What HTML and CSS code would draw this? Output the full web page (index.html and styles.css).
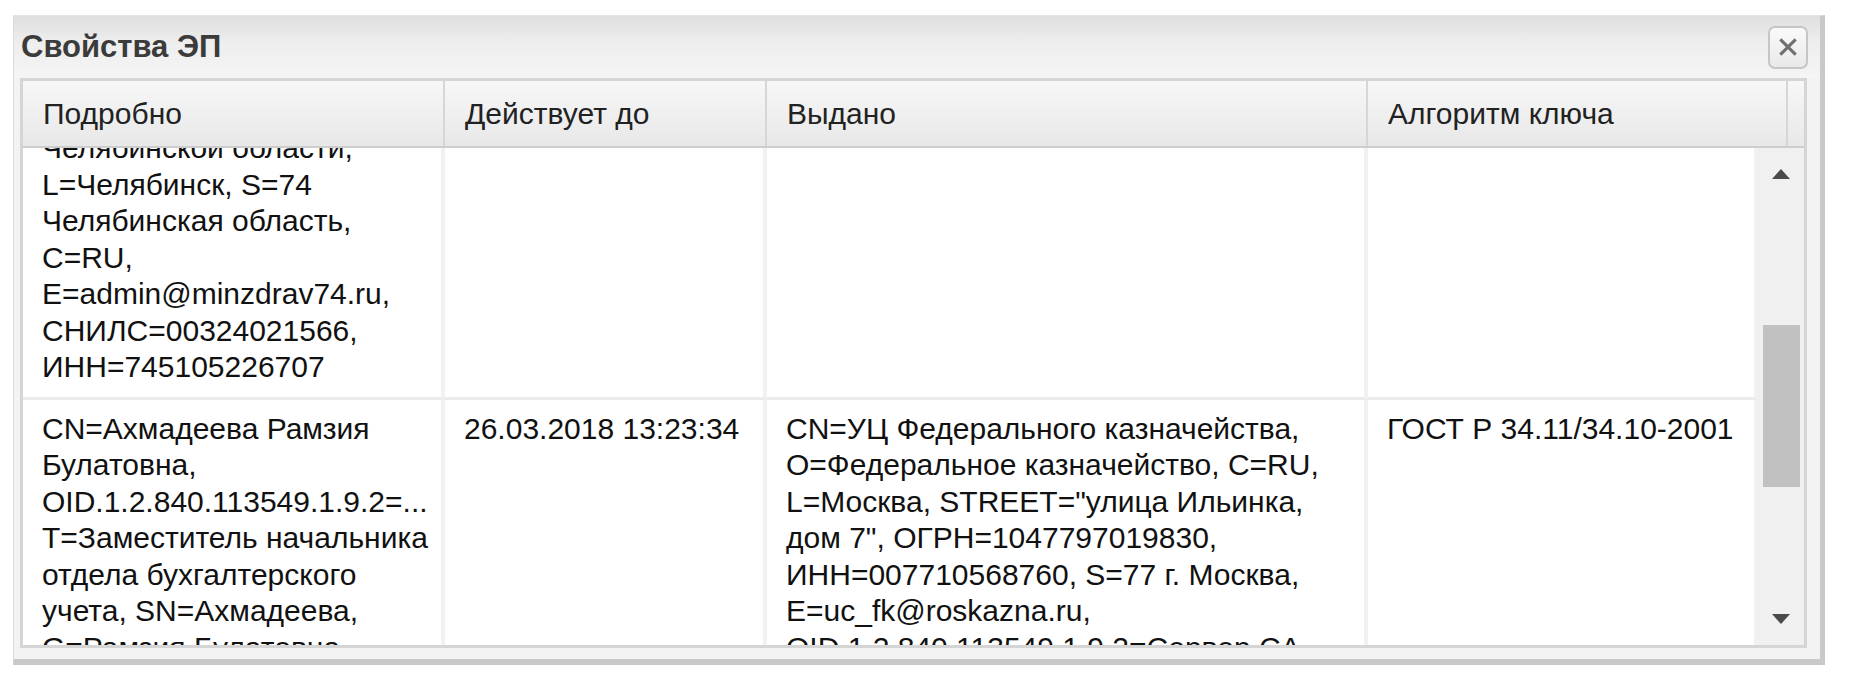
FILE: index.html
```html
<!DOCTYPE html>
<html lang="ru">
<head>
    <meta charset="UTF-8">
    <title>Свойства ЭП</title>
    <link rel="stylesheet" href="styles.css">
</head>
<body>
    <div class="window">
        <div class="window-header">
            <span class="window-title">Свойства ЭП</span>
            <span class="tool-close">
                <svg viewBox="0 0 20 20"><path d="M3 3 L17 17 M17 3 L3 17"/></svg>
            </span>
        </div>
        <div class="window-body">
            <div class="grid">
                <div class="grid-header">
                    <div class="hd col-details">Подробно</div>
                    <div class="hd col-valid">Действует до</div>
                    <div class="hd col-issuer">Выдано</div>
                    <div class="hd col-algo">Алгоритм ключа</div>
                    <div class="hd-filler"></div>
                </div>
                <div class="grid-view">
                    <div class="grid-scroller">
                        <table class="grid-rows">
                            <colgroup>
                                <col class="c-details">
                                <col class="c-valid">
                                <col class="c-issuer">
                                <col class="c-algo">
                            </colgroup>
                            <tr>
                                <td>Челябинской области,<br>L=Челябинск, S=74<br>Челябинская область,<br>C=RU,<br>E=admin@minzdrav74.ru,<br>СНИЛС=00324021566,<br>ИНН=745105226707</td>
                                <td></td>
                                <td></td>
                                <td></td>
                            </tr>
                            <tr>
                                <td>CN=Ахмадеева Рамзия<br>Булатовна,<br>OID.1.2.840.113549.1.9.2=...<br>T=Заместитель начальника<br>отдела бухгалтерского<br>учета, SN=Ахмадеева,<br>G=Рамзия Булатовна,</td>
                                <td>26.03.2018 13:23:34</td>
                                <td>CN=УЦ Федерального казначейства,<br>O=Федеральное казначейство, C=RU,<br>L=Москва, STREET="улица Ильинка,<br>дом 7", ОГРН=1047797019830,<br>ИНН=007710568760, S=77 г. Москва,<br>E=uc_fk@roskazna.ru,<br>OID.1.2.840.113549.1.9.2=Сервер CA</td>
                                <td>ГОСТ Р 34.11/34.10-2001</td>
                            </tr>
                        </table>
                    </div>
                    <div class="scrollbar">
                        <div class="scroll-btn">
                            <svg viewBox="0 0 18 10"><polygon points="0,10 9,0 18,10"/></svg>
                        </div>
                        <div class="scroll-track">
                            <div class="scroll-thumb"></div>
                        </div>
                        <div class="scroll-btn">
                            <svg viewBox="0 0 18 10"><polygon points="0,0 18,0 9,10"/></svg>
                        </div>
                    </div>
                </div>
            </div>
        </div>
    </div>
</body>
</html>
```

FILE: styles.css
```css
* {
    margin: 0;
    padding: 0;
    box-sizing: border-box;
}

body {
    background: #fff;
    font-family: "Liberation Sans", Arial, sans-serif;
    font-size: 30px;
    color: #111;
}

/* окно */
.window {
    margin: 15px 0 0 13px;
    width: 1812px;
    height: 650px;
    display: flex;
    flex-direction: column;
    background: #f3f3f3;
    border-top: 1px solid #e4e4e4;
    border-left: 1px solid #dcdcdc;
    border-right: 5px solid #c9c9c9;
    border-bottom: 6px solid #c9c9c9;
}

.window-header {
    flex-shrink: 0;
    height: 62px;
    display: flex;
    align-items: center;
    justify-content: space-between;
    padding: 0 12px 0 7px;
    background: linear-gradient(#dfdfdf, #eeeeee 45%, #f5f5f5);
}

.window-title {
    font-weight: bold;
    font-size: 31px;
    color: #3b3b3b;
}

.tool-close {
    width: 40px;
    height: 43px;
    display: flex;
    align-items: center;
    justify-content: center;
    border: 2px solid #c6c6c6;
    border-radius: 7px;
    background: linear-gradient(#fafafa, #e9e9e9);
}

.tool-close svg {
    width: 22px;
    height: 22px;
    fill: none;
    stroke: #707070;
    stroke-width: 2.8;
}

.window-body {
    flex: 1;
    min-height: 0;
    display: flex;
    padding: 0 13px 11px 6px;
}

/* грид */
.grid {
    flex: 1;
    min-height: 0;
    display: flex;
    flex-direction: column;
    background: #fff;
    border: 3px solid #d5d5d5;
}

.grid-header {
    flex-shrink: 0;
    display: flex;
    height: 67px;
    border-bottom: 2px solid #cdcdcd;
    background: linear-gradient(#f7f7f7, #e8e8e8);
}

.hd {
    display: flex;
    align-items: center;
    padding-left: 20px;
    color: #222;
    white-space: nowrap;
    border-right: 2px solid #d6d6d6;
}

.col-details { width: 422px; }
.col-valid { width: 322px; }
.col-issuer { width: 601px; }
.col-algo { width: 420px; }

.hd-filler {
    flex: 1;
}

.grid-view {
    flex: 1;
    display: flex;
    min-height: 0;
}

.grid-scroller {
    flex: 1;
    overflow: hidden;
}

.grid-rows {
    width: 1735px;
    table-layout: fixed;
    border-collapse: separate;
    border-spacing: 0;
    /* текущая позиция прокрутки */
    margin-top: -29px;
}

.c-details { width: 422px; }
.c-valid { width: 322px; }
.c-issuer { width: 601px; }
.c-algo { width: 390px; }

.grid-rows td {
    vertical-align: top;
    padding: 11px 8px 11px 19px;
    line-height: 36.5px;
    white-space: nowrap;
    overflow: hidden;
    border-right: 4px solid #f1f1f1;
    border-bottom: 3px solid #ebebeb;
}

/* полоса прокрутки */
.scrollbar {
    flex-shrink: 0;
    width: 46px;
    display: flex;
    flex-direction: column;
    background: #f0f0f0;
}

.scroll-btn {
    height: 52px;
    display: flex;
    align-items: center;
    justify-content: center;
}

.scroll-btn svg {
    width: 18px;
    height: 10px;
    fill: #4a4a4a;
}

.scroll-track {
    flex: 1;
}

.scroll-thumb {
    margin: 125px 4px 0 5px;
    height: 162px;
    background: #c1c1c1;
}
```
